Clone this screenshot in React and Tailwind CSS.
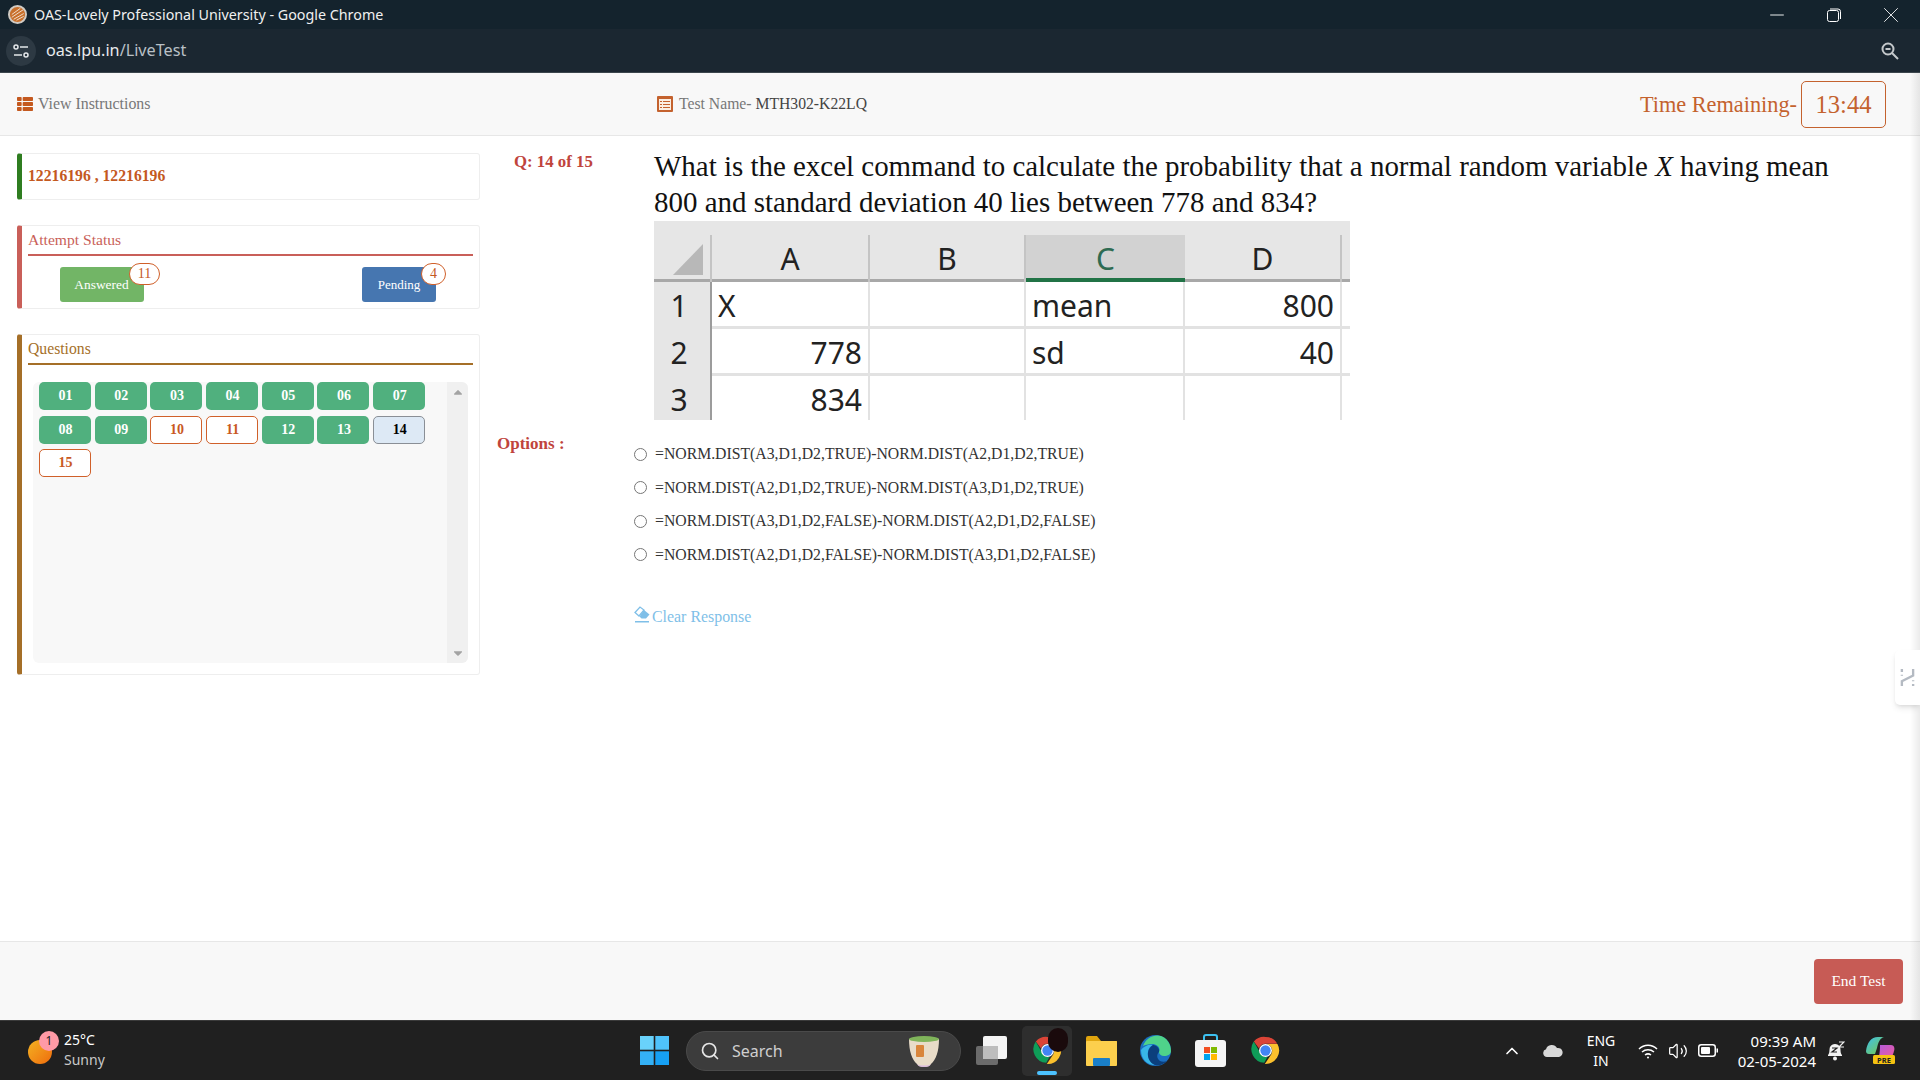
import { Minus, X, Search, ChevronUp, Volume2 } from 'lucide-react';
import { FaThList, FaCaretUp, FaCaretDown } from 'react-icons/fa';

const serif = "font-['Liberation_Serif',serif]";
const sans = "font-['Noto_Sans',sans-serif]";

const questions = [
    ['01', 'done'], ['02', 'done'], ['03', 'done'], ['04', 'done'], ['05', 'done'], ['06', 'done'], ['07', 'done'],
    ['08', 'done'], ['09', 'done'], ['10', 'open'], ['11', 'open'], ['12', 'done'], ['13', 'done'], ['14', 'current'],
    ['15', 'open'],
];

const questionStyles = {
    done: 'bg-[#50b07e] text-white leading-[28px]',
    open: 'bg-white text-[#c9591f] border border-[#d0602a] leading-[26px]',
    current: 'bg-[#dde9f5] text-black border border-[#8a8f96] leading-[26px]',
};

const options = [
    '=NORM.DIST(A3,D1,D2,TRUE)-NORM.DIST(A2,D1,D2,TRUE)',
    '=NORM.DIST(A2,D1,D2,TRUE)-NORM.DIST(A3,D1,D2,TRUE)',
    '=NORM.DIST(A3,D1,D2,FALSE)-NORM.DIST(A2,D1,D2,FALSE)',
    '=NORM.DIST(A2,D1,D2,FALSE)-NORM.DIST(A3,D1,D2,FALSE)',
];

const ChromeIcon = ({ className }) => (
    <svg viewBox="0 0 48 48" className={className}>
        <path fill="#db4437" d="M24 3a21 21 0 0 1 18.2 10.5H24a10.5 10.5 0 0 0-10 7.3L6 9.9A21 21 0 0 1 24 3z" />
        <path fill="#0f9d58" d="M5.8 10.2l9.2 16A10.5 10.5 0 0 0 27 34l-5 9A21 21 0 0 1 5.800 10.200z" />
        <path fill="#fbc02d" d="M42.500 14H24a10.500 10.500 0 0 1 9 15.700L23 45A21 21 0 0 0 42.500 14z" />
        <circle cx="24" cy="24" r="10" fill="#fff" />
        <circle cx="24" cy="24" r="8" fill="#4285f4" />
    </svg>
);

const ExcelSheet = () => {
    const cols = ['A', 'B', 'C', 'D'];
    const rows = [
        ['1', 'X', '', 'mean', '800'],
        ['2', '778', '', 'sd', '40'],
        ['3', '834', '', '', ''],
    ];
    return (
        <div className={`w-[696px] h-[199px] mt-[1px] bg-white overflow-hidden ${sans} text-[30px] text-[#222]`}>
            <div className="h-[14px] bg-[#e6e6e6]" />
            <div className="grid grid-cols-[58px_158px_156px_159px_157px_8px] h-[47px] bg-[#e6e6e6] border-b-[3px] border-[#a8a8a8] text-center leading-[48px]">
                <div className="border-r-2 border-[#c4c4c4] flex items-end justify-end pr-[7px] pb-[8px]">
                    <svg viewBox="0 0 30 31" className="w-[30px] h-[31px]">
                        <polygon points="30,0 30,31 0,31" fill="#b8b8b8" />
                    </svg>
                </div>
                {cols.map((c) => (
                    <div
                        key={c}
                        className={c === 'C' ? 'bg-[#d2d2d2] text-[#2e6b52] border-b-[4px] border-[#217346] h-[47px]' : 'border-r-2 border-[#c4c4c4]'}
                    >
                        {c}
                    </div>
                ))}
                <div />
            </div>
            {rows.map((r) => (
                <div key={r[0]} className="grid grid-cols-[58px_158px_156px_159px_157px_8px] h-[47px] border-b-[3px] border-[#e2e2e2] leading-[48px]">
                    <div className="bg-[#e6e6e6] border-r-2 border-[#9c9c9c] text-center pr-[6px]">{r[0]}</div>
                    <div className={`border-r-2 border-[#e2e2e2] px-[6px] ${r[1] === 'X' ? '' : 'text-right'}`}>{r[1]}</div>
                    <div className="border-r-2 border-[#e2e2e2]">{r[2]}</div>
                    <div className="border-r-2 border-[#e2e2e2] px-[6px]">{r[3]}</div>
                    <div className="border-r-2 border-[#e2e2e2] px-[6px] text-right">{r[4]}</div>
                    <div />
                </div>
            ))}
        </div>
    );
};

const Sidebar = () => (
    <aside className="w-[480px] shrink-0 pl-[17px] pt-[17px] flex flex-col gap-[25px]">
        <div className="h-[47px] border border-[#eeeeee] border-l-[5px] border-l-[#2f7d20] rounded-[3px] pl-[6px] flex items-center">
            <span className="text-[15.700px] font-bold text-[#c4591f] -mt-[1px]">12216196 , 12216196</span>
        </div>

        <div className="h-[84px] border border-[#eeeeee] border-l-[5px] border-l-[#c95f59] rounded-[3px] pl-[6px] pr-[6px] relative">
            <div className="h-[30px] border-b-2 border-[#c95f59] text-[15.600px] text-[#c95f59] leading-[27px]">Attempt Status</div>
            <div className="flex mt-[11px] pl-[32px]">
                <div className="relative w-[84px] h-[35px] rounded-[3px] bg-[#72b566] text-white text-[13.400px] text-center leading-[36px] pr-[1px]">
                    Answered
                    <span className="absolute -top-[4px] left-[69px] w-[31px] h-[22px] rounded-full bg-white border border-[#d0602a] text-[#c4591f] text-[14px] leading-[19px]">11</span>
                </div>
                <div className="relative ml-[218px] w-[74px] h-[35px] rounded-[3px] bg-[#4676b0] text-white text-[13px] text-center leading-[36px]">
                    Pending
                    <span className="absolute -top-[4px] left-[59px] w-[25px] h-[22px] rounded-full bg-white border border-[#d0602a] text-[#c4591f] text-[14px] leading-[19px]">4</span>
                </div>
            </div>
        </div>

        <div className="h-[341px] border border-[#eeeeee] border-l-[5px] border-l-[#a56f28] rounded-[3px] pl-[6px] pr-[6px]">
            <div className="h-[30px] border-b-2 border-[#a56f28] text-[15.700px] text-[#a56f28] leading-[28px]">Questions</div>
            <div className="mt-[17px] ml-[5px] w-[435px] h-[281px] bg-[#f8f8f8] rounded-[6px] flex overflow-hidden">
                <div className="flex-1 pl-[6px]">
                    <div className="flex flex-wrap gap-x-[3.700px] gap-y-[5.500px]">
                        {questions.map(([n, state]) => (
                            <div
                                key={n}
                                className={`w-[52px] h-[28px] rounded-[5px] text-[14px] font-bold text-center pl-[1px] ${questionStyles[state]}`}
                            >
                                {n}
                            </div>
                        ))}
                    </div>
                </div>
                <div className="w-[21px] bg-[#f0f0f0] flex flex-col items-center justify-between text-[#a3a3a3] text-[14px] pt-[3px] pb-[3px]">
                    <FaCaretUp />
                    <FaCaretDown />
                </div>
            </div>
        </div>
    </aside>
);

const TestPanel = () => (
    <main className="flex-1 pl-[17px] pt-[12px]">
        <div className="flex">
            <div className="w-[157px] pl-[17px] pt-[4px] text-[16.800px] font-bold text-[#c0443c] leading-[20px] shrink-0">Q: 14 of 15</div>
            <div>
                <p className="w-[1200px] text-[28.950px] leading-[36px] text-[#111]">
                    What is the excel command to calculate the probability that a normal random variable <i>X</i> having mean 800 and standard deviation 40 lies between 778 and 834?
                </p>
                <ExcelSheet />
            </div>
        </div>
        <div className="flex mt-[13px]">
            <div className="w-[137px] shrink-0 text-[17px] font-bold text-[#c0443c] leading-[22px]">Options :</div>
            <div className="pt-[11px]">
                <div className="flex flex-col gap-[13.500px]">
                    {options.map((o) => (
                        <label key={o} className="flex items-center gap-[8px] h-[20px] text-[15.750px] text-[#333]">
                            <input type="radio" name="option" className="w-[13px] h-[13px] m-0" />
                            {o}
                        </label>
                    ))}
                </div>
                <div className="mt-[40px] flex items-center gap-[2px] text-[15.900px] text-[#7fbfe8]">
                    <svg viewBox="0 0 16 17" className="w-[16px] h-[17px] -mt-[4px] shrink-0">
                        <path fill="#fff" stroke="#7fbfe8" strokeWidth="1.300" d="M1 6.500 6 1l4 3-5 6z" />
                        <path fill="#7fbfe8" d="M5.500 10.500 10 4l5.500 4.500L12 12.500H7.500z" />
                        <rect x="1" y="15" width="14" height="1.500" fill="#7fbfe8" />
                    </svg>
                    Clear Response
                </div>
            </div>
        </div>
    </main>
);

const Taskbar = () => (
    <footer className={`h-[60px] bg-[#202020] border-t border-[#3a3a3a] flex items-center text-white ${sans}`}>
        <div className="w-[640px] shrink-0 flex items-center pl-[28px]">
            <div className="relative w-[24px] h-[24px] rounded-full bg-gradient-to-br from-[#f2b222] to-[#ee6a0c] mt-[2px]">
                <span className="absolute -top-[9px] left-[11px] w-[20px] h-[20px] rounded-full bg-[#ff9aa6] text-[#222] text-[12px] text-center leading-[20px]">1</span>
            </div>
            <div className="ml-[12px] text-[14px] leading-[20px] -mt-[1px]">
                <div>25°C</div>
                <div className="text-[#c8c8c8]">Sunny</div>
            </div>
        </div>

        <svg viewBox="0 0 29 29" className="w-[29px] h-[29px] shrink-0">
            <rect x="0" y="0" width="13.700" height="13.700" fill="#69d2fb" />
            <rect x="15.300" y="0" width="13.700" height="13.700" fill="#4fc3fb" />
            <rect x="0" y="15.300" width="13.700" height="13.700" fill="#34b1f6" />
            <rect x="15.300" y="15.300" width="13.700" height="13.700" fill="#16a0f4" />
        </svg>

        <div className="ml-[17px] w-[275px] h-[40px] rounded-full bg-[#3c3c3c] border border-[#4a4a4a] flex items-center pl-[13px] pr-[20px] shrink-0">
            <Search size={20} className="text-[#e6e6e6]" />
            <span className="ml-[12px] text-[16px] text-[#cfcfcf]">Search</span>
            <svg viewBox="0 0 32 34" className="ml-auto w-[32px] h-[34px]">
                <path fill="#e8dcc8" d="M1 5h30c0 12-3 21-8 25-1 2-3 3-7 3s-6-1-7-3C4 26 1 17 1 5z" />
                <path fill="#d9b8e0" d="M9 30c2 2 12 2 14 0-1 2-3 3-7 3s-6-1-7-3z" />
                <ellipse cx="16" cy="5" rx="15" ry="3" fill="#7fb45a" />
                <rect x="8" y="11" width="8" height="12" rx="1" fill="#d9853a" />
            </svg>
        </div>

        <svg viewBox="0 0 31 29" className="ml-[15px] w-[31px] h-[29px] shrink-0">
            <rect x="0" y="10" width="22" height="19" rx="2" fill="#6b6b6b" />
            <rect x="7" y="0" width="24" height="23" rx="2" fill="#f4f4f4" />
            <rect x="7" y="10" width="15" height="13" fill="#bdbdbd" />
        </svg>

        <div className="relative ml-[15px] w-[50px] h-[50px] rounded-[5px] bg-[#2e2e2e] flex items-center justify-center shrink-0">
            <ChromeIcon className="w-[31px] h-[31px]" />
            <span className="absolute top-[2px] left-[26px] w-[20px] h-[24px] rounded-full bg-[#1a0a0c]" />
            <span className="absolute bottom-[1px] left-[15px] w-[20px] h-[4px] rounded-full bg-[#4cc2ff]" />
        </div>

        <svg viewBox="0 0 31 30" className="ml-[14px] w-[31px] h-[30px] shrink-0">
            <path fill="#e0a50e" d="M0 2a2 2 0 0 1 2-2h9l4 5h16v6H0z" />
            <rect x="0" y="5" width="31" height="25" rx="1" fill="#fccf4d" />
            <rect x="7" y="22" width="17" height="8" rx="1" fill="#1a7fc8" />
        </svg>

        <svg viewBox="0 0 31 31" className="ml-[23px] w-[31px] h-[31px] shrink-0">
            <circle cx="15.500" cy="15.500" r="15.500" fill="#1b6fc2" />
            <path fill="#4fd38a" d="M3 11C6 3 14-1 21 1c6 2 10 8 10 15 0 3-3 5-7 5-3 0-5-2-5-4 2-4-2-8-7-8-4 0-7 1-9 2z" />
            <path fill="#38b6e8" d="M1 15c3-4 8-6 12-5-5 2-7 9-3 15 1 2 3 4 5 5C7 30 1 24 1 15z" />
            <path fill="#0b3f7d" d="M13 10c4 0 7 4 6 7-2 2-3 6 1 9 2 1 5 1 7 0-3 3-7 5-12 4-8-3-10-15-2-20z" />
        </svg>

        <svg viewBox="0 0 31 33" className="ml-[24px] w-[31px] h-[33px] shrink-0">
            <path fill="none" stroke="#3cc0f0" strokeWidth="2" d="M9 8V3a2 2 0 0 1 2-2h9a2 2 0 0 1 2 2v5" />
            <rect x="0" y="6" width="31" height="27" rx="3" fill="#f5f5f5" />
            <rect x="9" y="13" width="6" height="6" fill="#f25022" />
            <rect x="16" y="13" width="6" height="6" fill="#7fba00" />
            <rect x="9" y="20" width="6" height="6" fill="#00a4ef" />
            <rect x="16" y="20" width="6" height="6" fill="#ffb900" />
        </svg>

        <ChromeIcon className="ml-[24px] w-[31px] h-[31px] shrink-0" />

        <div className="ml-auto flex items-center pr-[25px]">
            <ChevronUp size={20} className="text-white" />
            <svg viewBox="0 0 20 13" className="ml-[21px] w-[20px] h-[13px]">
                <path fill="#d8d8d8" d="M4 13a4 4 0 0 1-1-7.800A6 6 0 0 1 14 4a4.500 4.500 0 0 1 2 9z" />
            </svg>
            <div className="ml-[23px] w-[30px] text-[14px] leading-[20px] text-center">
                <div>ENG</div>
                <div>IN</div>
            </div>
            <svg viewBox="0 0 20 16" className="ml-[22px] w-[20px] h-[16px]" fill="none" stroke="#fff" strokeWidth="1.500">
                <path d="M1 6c5-5 13-5 18 0M4 9c3.500-3 8.500-3 12 0M7 12c2-1.500 4-1.500 6 0" />
                <circle cx="10" cy="14.500" r="1" fill="#fff" stroke="none" />
            </svg>
            <Volume2 size={20} className="ml-[10px] text-white" strokeWidth={1.500} />
            <svg viewBox="0 0 20 13" className="ml-[10px] w-[20px] h-[13px]">
                <rect x="0.750" y="0.750" width="16.500" height="11.500" rx="2.500" fill="none" stroke="#fff" strokeWidth="1.500" />
                <rect x="3" y="3" width="9" height="7" rx="1" fill="#fff" />
                <rect x="18.500" y="4.500" width="1.500" height="4" fill="#fff" />
            </svg>
            <div className="ml-[15px] text-[15px] leading-[20px] text-right w-[83px]">
                <div>09:39 AM</div>
                <div className="whitespace-nowrap">02-05-2024</div>
            </div>
            <svg viewBox="0 0 18 20" className="ml-[11px] w-[18px] h-[20px]">
                <path fill="#f2f2f2" d="M1 14c2-2 1-5 2-8 1-2 3-3 5-3s4 1 5 3c1 3 0 6 2 8v1H1z" />
                <circle cx="8" cy="17.500" r="2" fill="#f2f2f2" />
                <path fill="none" stroke="#202020" strokeWidth="1.200" d="M5 7h5l-5 4h5" />
                <path fill="none" stroke="#f2f2f2" strokeWidth="1.200" d="M12 1h5l-5 5h5" />
            </svg>
            <svg viewBox="0 0 29 27" className="ml-[21px] w-[29px] h-[27px]">
                <defs>
                    <linearGradient id="copA" x1="0" y1="0" x2="1" y2="1">
                        <stop offset="0" stopColor="#3cc0f0" />
                        <stop offset="1" stopColor="#7ac943" />
                    </linearGradient>
                    <linearGradient id="copB" x1="0" y1="0" x2="1" y2="1">
                        <stop offset="0" stopColor="#b05be0" />
                        <stop offset="1" stopColor="#f05a9a" />
                    </linearGradient>
                </defs>
                <path fill="url(#copA)" d="M0 14C1 6 5 0 12 0h6c-4 1-6 6-7 11L9 17H3c-2 0-3-1-3-3z" />
                <path fill="url(#copB)" d="M14 8h11c3 0 4 3 3 6-1 5-4 9-9 9h-9c3-2 4-6 4-15z" />
                <rect x="7" y="18" width="22" height="9" rx="1.500" fill="#f5c211" />
                <text x="18" y="25.500" textAnchor="middle" fontSize="7.500" fontWeight="700" fill="#202020" fontFamily="Noto Sans, sans-serif">PRE</text>
            </svg>
        </div>
    </footer>
);

const App = () => {
    return (
        <div className={`relative h-screen overflow-hidden flex flex-col bg-white ${serif}`}>
            <header className={`h-[29px] bg-[#14232d] flex items-center text-white ${sans}`}>
                <svg viewBox="0 0 20 20" className="ml-[8px] w-[19px] h-[19px] shrink-0">
                    <circle cx="10" cy="10" r="9" fill="#c8702c" stroke="#d0cbc4" strokeWidth="2" />
                    <path fill="none" stroke="#f3e2d0" strokeWidth="1" d="M4 13 16 5M6 15 16.500 9M4 10 13 3.500M9 16l7.500-4" />
                </svg>
                <span className="ml-[7px] text-[14.300px] text-[#f0f0f0]">OAS-Lovely Professional University - Google Chrome</span>
                <div className="ml-auto flex items-center">
                    <Minus size={22} strokeWidth={1} />
                    <svg viewBox="0 0 14 14" className="ml-[39px] w-[14px] h-[14px]" fill="none" stroke="#fff" strokeWidth="1">
                        <rect x="0.500" y="2.500" width="11" height="11" rx="2" />
                        <path d="M3 1h8a2.500 2.500 0 0 1 2.500 2.500V11" />
                    </svg>
                    <X size={26} strokeWidth={0.800} className="ml-[37px] mr-[16px]" />
                </div>
            </header>

            <div className={`h-[44px] bg-[#1b2731] border-b border-[#3c464d] flex items-center ${sans}`}>
                <div className="ml-[6px] w-[30px] h-[30px] rounded-full bg-[#2d3943] flex items-center justify-center">
                    <svg viewBox="0 0 16 14" className="w-[16px] h-[14px]" fill="none" stroke="#e4e7ea" strokeWidth="1.500">
                        <circle cx="3" cy="3" r="2" />
                        <path d="M7 3h8M1 11h8" />
                        <circle cx="13" cy="11" r="2" />
                    </svg>
                </div>
                <span className="ml-[10px] text-[16.200px] text-[#e8eaed]">oas.lpu.in<span className="text-[#b9c0c6]">/LiveTest</span></span>
                <svg viewBox="0 0 18 18" className="ml-auto mr-[21px] w-[18px] h-[18px]" fill="none" stroke="#c4c8cb" strokeWidth="2">
                    <circle cx="7" cy="7" r="5.500" />
                    <path d="M4.500 7h5M11 11l6 6" />
                </svg>
            </div>

            <nav className="h-[63px] bg-[#f8f8f8] border-b border-[#e7e7e7] flex items-center">
                <div className="w-[657px] shrink-0 pl-[17px] flex items-center gap-[5px] text-[15.900px] text-[#777]">
                    <FaThList className="text-[#c4591f] text-[16px]" />
                    View Instructions
                </div>
                <div className="flex items-center gap-[6px] text-[15.700px] text-[#777]">
                    <svg viewBox="0 0 16 16" className="w-[16px] h-[16px] shrink-0">
                        <rect width="16" height="16" rx="1" fill="#c4622e" />
                        <rect x="2" y="3" width="12" height="11" fill="#fbeee2" />
                        <path stroke="#c4622e" strokeWidth="1.200" d="M3 5.500h2M6 5.500h7M3 8.500h2M6 8.500h7M3 11.500h2M6 11.500h7" />
                    </svg>
                    <span>Test Name- <span className="text-[#444]">MTH302-K22LQ</span></span>
                </div>
                <div className="ml-auto pr-[34px] flex items-center gap-[4px] text-[#c4622e]">
                    <span className="text-[22.300px] mt-[2px]">Time Remaining-</span>
                    <span className="w-[85px] h-[47px] border border-[#c4622e] rounded-[5px] text-center text-[24.600px] leading-[45px]">13:44</span>
                </div>
            </nav>

            <div className="flex-1 flex min-h-0">
                <Sidebar />
                <TestPanel />
            </div>

            <div className="h-[79px] bg-[#f8f8f8] border-t border-[#e7e7e7] flex justify-end pt-[17px] pr-[17px]">
                <div className="w-[89px] h-[45px] rounded-[4px] bg-[#c75b55] text-white text-[15.500px] text-center leading-[44px]">End Test</div>
            </div>

            <Taskbar />

            {/* side handle + page edge shadow from the extension overlay */}
            <div className="absolute top-[73px] right-0 bottom-[60px] w-[10px] bg-gradient-to-r from-transparent to-[#00000014] pointer-events-none" />
            <div className="absolute top-[650px] right-0 w-[25px] h-[55px] bg-white rounded-l-[5px] shadow-md flex items-center justify-center">
                <svg viewBox="0 0 16 20" className="w-[15px] h-[19px]" fill="none" stroke="#b4bac2" strokeWidth="2.500">
                    <path d="M2 1v3M2 7v1M14 1v7L2 14v5M14 13v1M14 17v2" />
                </svg>
            </div>
        </div>
    );
};

export default App;
